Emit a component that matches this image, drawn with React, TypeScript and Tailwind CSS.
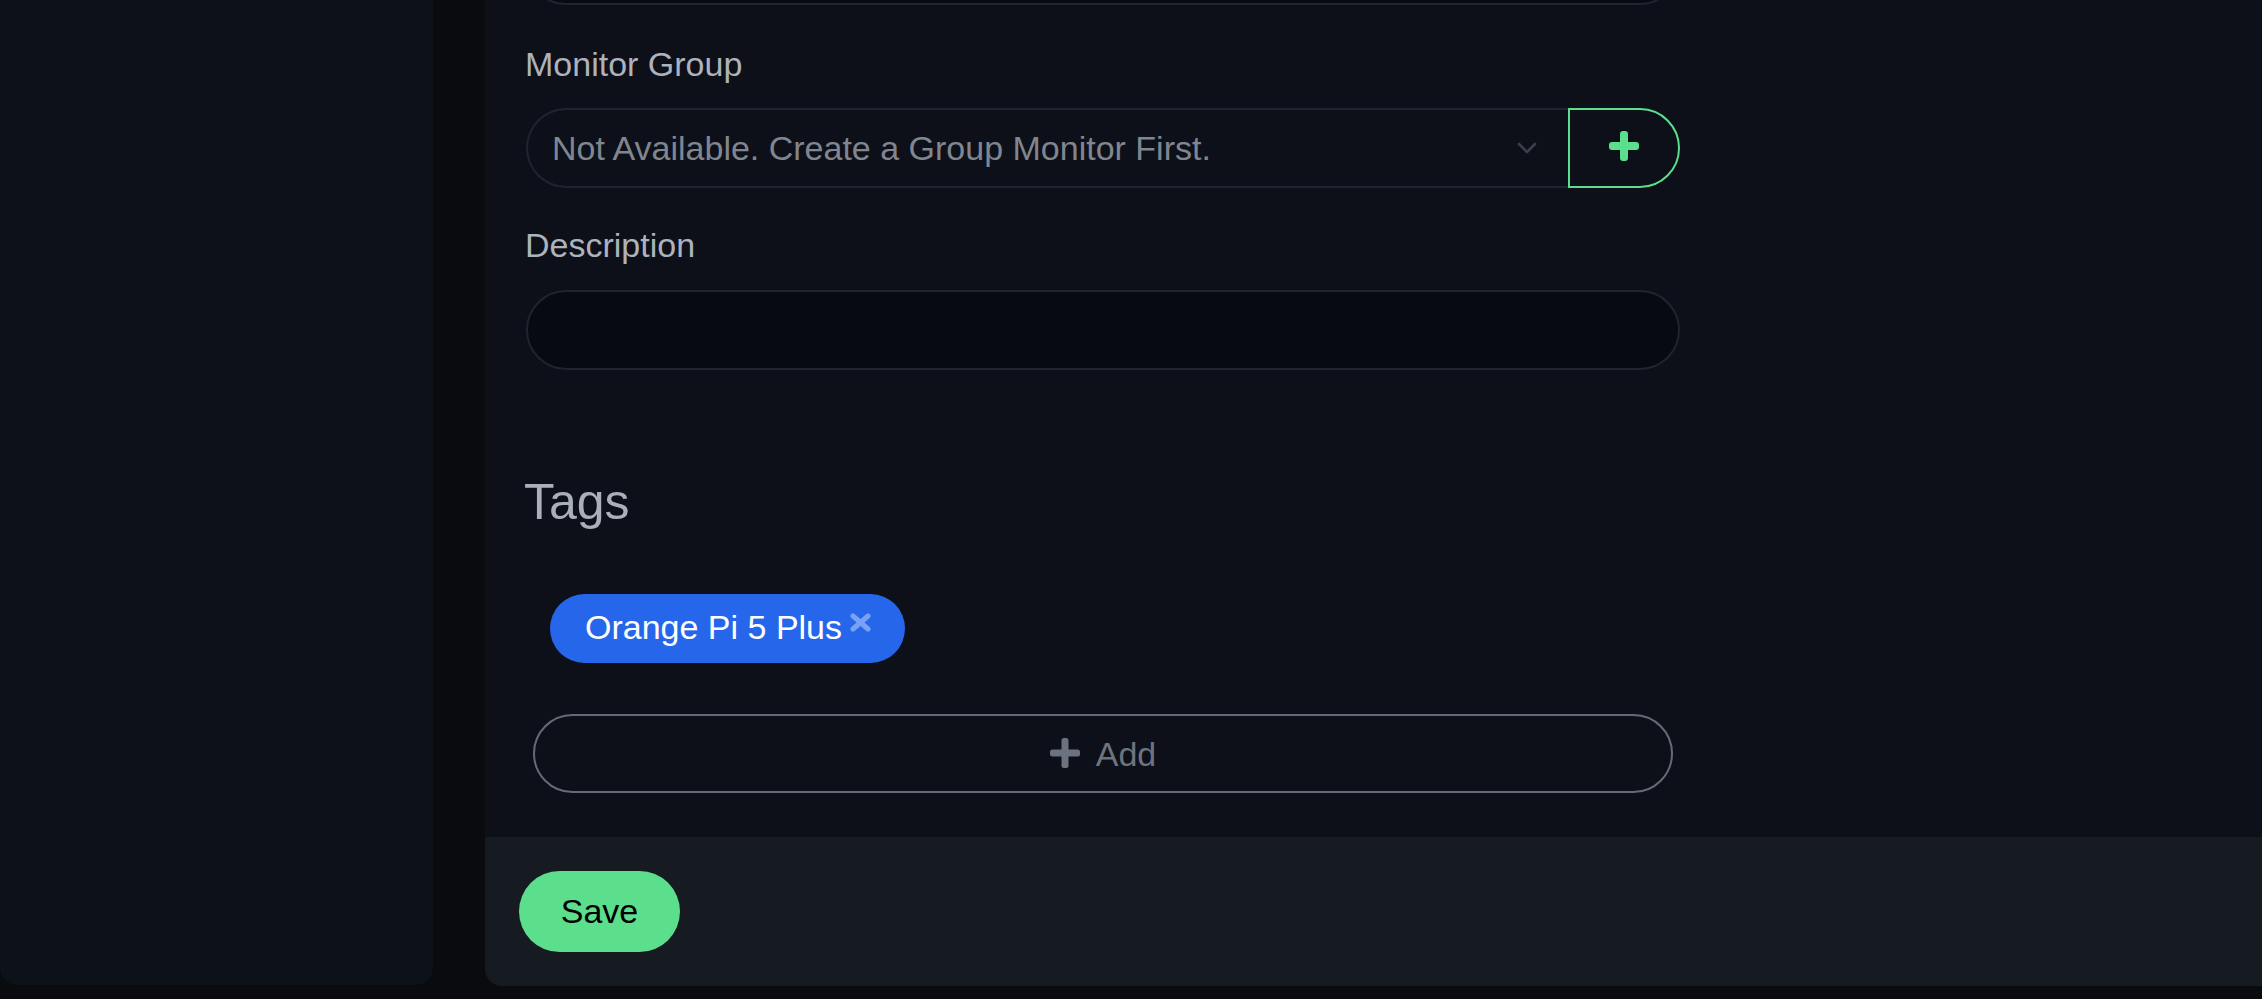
import React from "react";

export default function App() {
  return (
    <div className="flex h-[999px] w-full overflow-hidden bg-[#090b0e] font-['Liberation_Sans',Arial,sans-serif]">
      <aside className="h-[985px] w-[433px] shrink-0 rounded-b-[17px] bg-[#0d1118]" />
      <main className="ml-[52px] flex h-[986px] flex-1 flex-col overflow-hidden rounded-bl-[17px] bg-[#0d1018]">
        <div className="flex-1 overflow-hidden pl-[41px]">
          <div className="flex w-[1154px] flex-col">
            <div className="-mt-[75px] h-[80px] rounded-full border-2 border-[#1e2530] bg-[#070a10]" />

            <label className="-ml-[1px] mt-[34px] text-[34px] leading-[50px] text-[#adb3bd]">
              Monitor Group
            </label>
            <div className="mt-[19px] flex h-[80px]">
              <div className="flex flex-1 items-center rounded-l-full border-2 border-r-0 border-[#1e2530] pl-[24px] pr-[31px]">
                <span className="flex-1 text-[34px] leading-none text-[#80868f]">
                  Not Available. Create a Group Monitor First.
                </span>
                <svg width="20" height="12" viewBox="0 0 20 12" fill="none">
                  <polyline
                    points="2,2 10,10 18,2"
                    stroke="#3a404a"
                    strokeWidth="2.6"
                    strokeLinecap="round"
                    strokeLinejoin="round"
                  />
                </svg>
              </div>
              <button className="flex h-[80px] w-[112px] items-center justify-center rounded-r-full border-2 border-[#5cdf8c]">
                <svg width="30" height="30" viewBox="0 0 30 30" className="-mt-[4px]">
                  <rect x="0" y="11" width="30" height="8" rx="3" fill="#5cdf8c" />
                  <rect x="11" y="0" width="8" height="30" rx="3" fill="#5cdf8c" />
                </svg>
              </button>
            </div>

            <label className="-ml-[1px] mt-[32px] text-[34px] leading-[50px] text-[#adb3bd]">
              Description
            </label>
            <div className="mt-[20px] h-[80px] rounded-full border-2 border-[#1e2530] bg-[#070a10]" />

            <h4 className="-ml-[2px] mt-[102px] text-[50px] leading-[60px] text-[#aab0bb]">Tags</h4>

            <div className="mt-[62px] ml-[24px] flex h-[69px] w-fit items-center rounded-full bg-[#2666ea] pb-[4px] pl-[35px] pr-[34px]">
              <span className="text-[34px] leading-none text-white">Orange Pi 5 Plus</span>
              <svg width="21" height="19" viewBox="0 0 21 19" className="ml-[8px] -mt-[8px]">
                <line x1="3" y1="3" x2="18" y2="16" stroke="#7ba1f4" strokeWidth="5" strokeLinecap="round" />
                <line x1="18" y1="3" x2="3" y2="16" stroke="#7ba1f4" strokeWidth="5" strokeLinecap="round" />
              </svg>
            </div>

            <button className="mx-[7px] mt-[51px] flex h-[79px] items-center justify-center gap-[16px] rounded-full border-2 border-[#646b75]">
              <svg width="30" height="30" viewBox="0 0 30 30" className="-mt-[2px]">
                <rect x="0" y="11.5" width="30" height="7" rx="2.5" fill="#6b7280" />
                <rect x="11.5" y="0" width="7" height="30" rx="2.5" fill="#6b7280" />
              </svg>
              <span className="text-[34px] leading-none text-[#6e747e]">Add</span>
            </button>
          </div>
        </div>
        <footer className="h-[149px] shrink-0 bg-[#161a21] p-[34px]">
          <button className="h-[81px] w-[161px] rounded-full bg-[#5cdf8c] pb-[2px] text-[34px] leading-none text-black">
            Save
          </button>
        </footer>
      </main>
    </div>
  );
}
